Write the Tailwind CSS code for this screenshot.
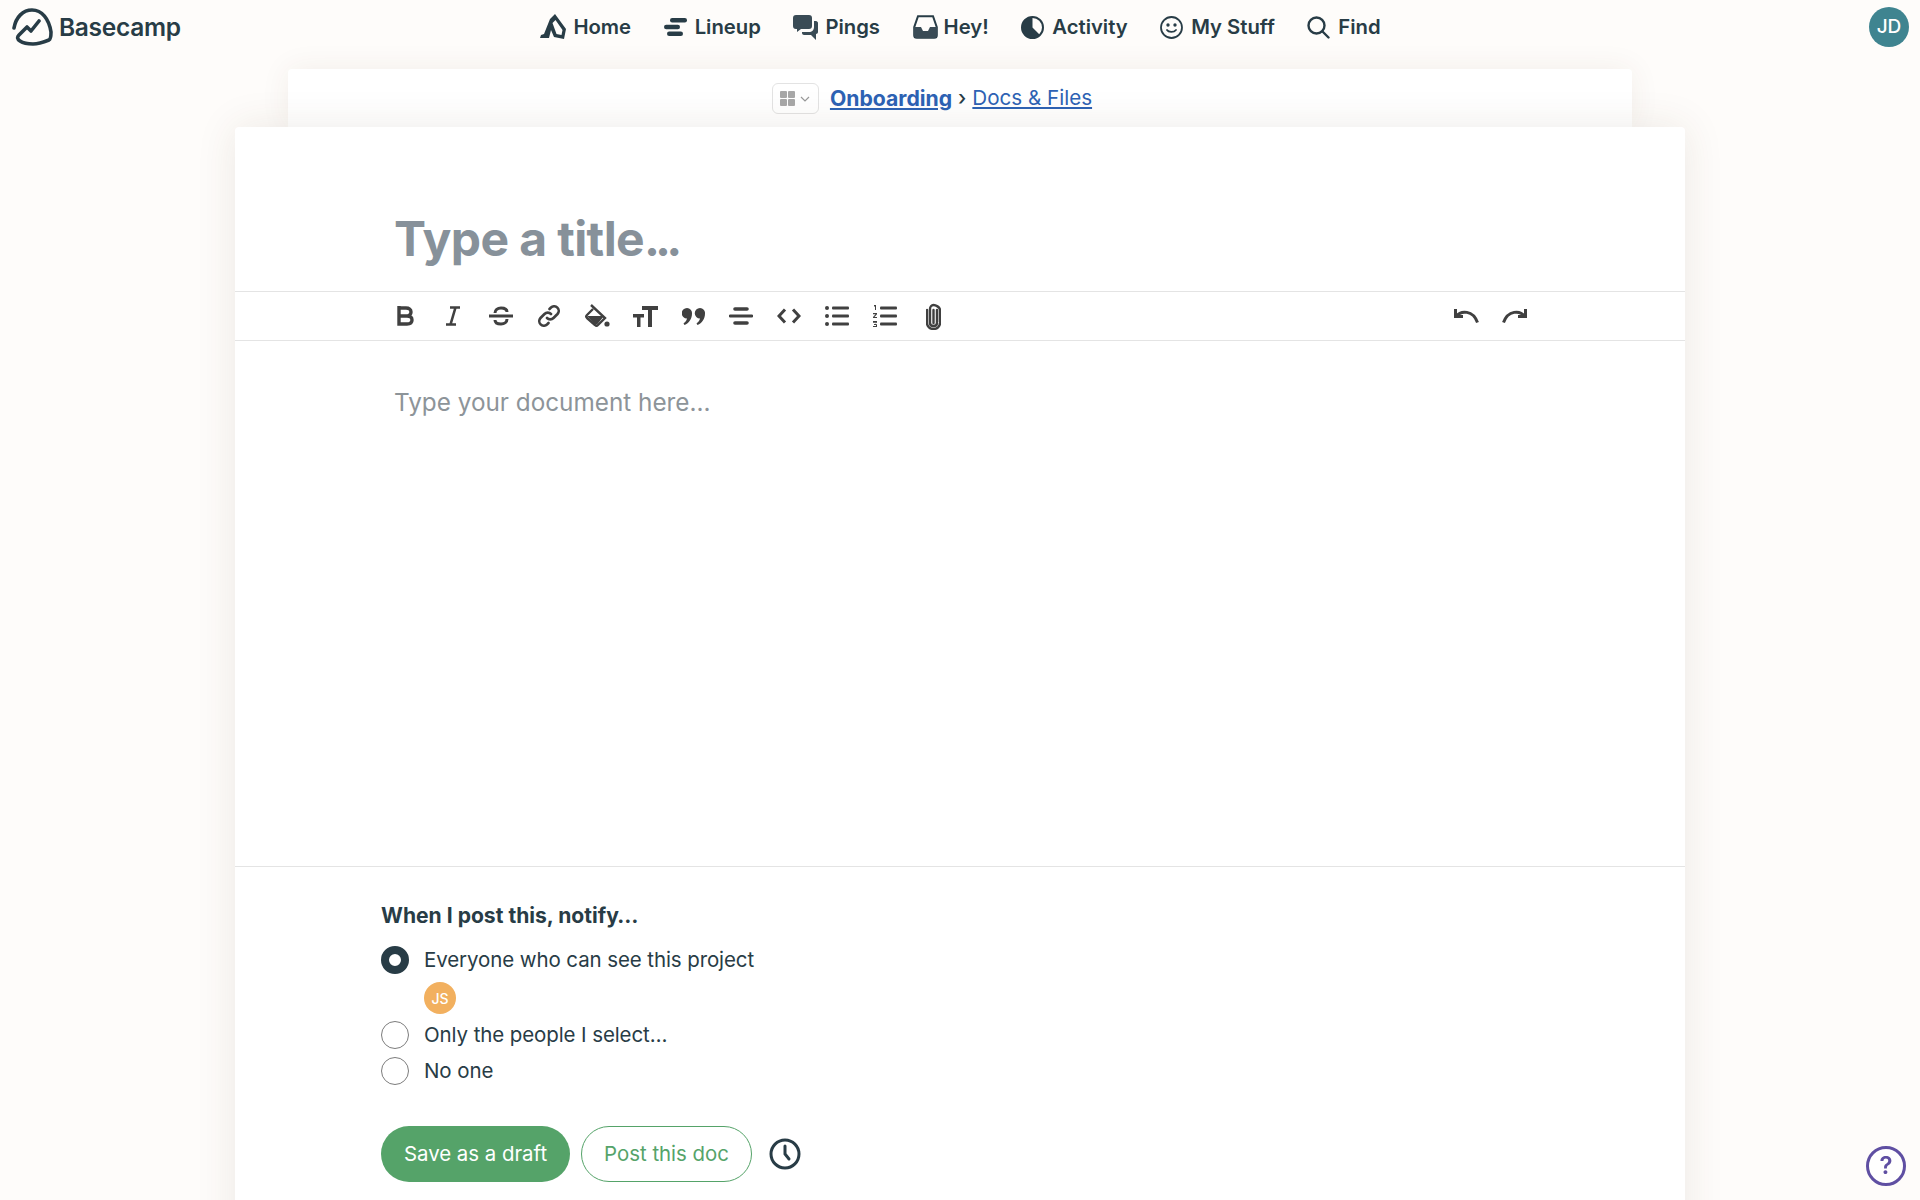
<!DOCTYPE html>
<html lang="en">
  <head>
    <meta charset="UTF-8" />
    <title>Basecamp - New doc</title>
    <script src="https://cdn.jsdelivr.net/npm/@tailwindcss/browser@4"></script>
  </head>

  <body class="font-['Inter',sans-serif] bg-[#fefcfa] text-[#283c46] h-screen overflow-hidden">
    <!-- Top nav -->
    <header class="grid grid-cols-[1fr_auto_1fr] items-center h-[54px] pl-3 pr-[11px]">
      <a class="flex items-center gap-[6px]">
        <svg class="w-[41px] h-[38px]" viewBox="0 0 41 38" fill="none" stroke="#283c46" stroke-width="3.600" stroke-linecap="round" stroke-linejoin="round">
          <path d="M2 20C4 9 11 2 20 2c10 0 17 9 19 22 0 4 0 7-2 8-5 2-11 4-16 4-5 0-10-1-13-3-3-2-3-4-1-6l8-8 4 4 8-10" />
        </svg>
        <span class="text-[24.500px] font-semibold tracking-[-0.3px]">Basecamp</span>
      </a>

      <nav class="flex items-center gap-[32.500px] text-[20.300px] font-semibold">
        <a class="flex items-center gap-[7px]">
          <svg class="w-[26px] h-[26px]" viewBox="0 0 26 26" fill="#283c46" fill-rule="evenodd"><path d="M15 0l11 15-2 10-10-2-3-7-2 8H0l1-3 3-1 6-15zM15.500 6l-3 3 4 11 5 1 1-5z" /></svg>
          Home
        </a>
        <a class="flex items-center gap-2">
          <svg class="w-[23px] h-[18px]" viewBox="0 0 23 18" fill="#283c46"><rect x="6" y="0" width="17" height="4.500" rx="2.200" /><rect x="0" y="6.800" width="16" height="4.500" rx="2.200" /><rect x="3" y="13.500" width="16" height="4.500" rx="2.200" /></svg>
          Lineup
        </a>
        <a class="flex items-center gap-[7px]">
          <svg class="w-[25px] h-[25px]" viewBox="0 0 25 25" fill="#3a4b55"><path d="M3 0h13c2 0 3 1 3 3v8c0 2-1 3-3 3H8l-4 3v-3H3c-2 0-3-1-3-3V3c0-2 1-3 3-3z" /><path d="M21 6h2c1 0 2 1 2 2v9c0 1-1 2-2 2v6l-5-5h-7c-1 0-2-1-2-2v-1h7c3 0 5-2 5-5V6z" /></svg>
          Pings
        </a>
        <a class="flex items-center gap-[6px]">
          <svg class="w-[25px] h-[24px]" viewBox="0 0 25 24" fill="none"><path d="M5 1.200h15l3.800 11v8c0 1.400-1 2.600-2.600 2.600H3.800c-1.600 0-2.600-1.200-2.600-2.600v-8z" stroke="#283c46" stroke-width="2" /><path d="M1 12h7l2 4h5l2-4h7v8c0 2-1 3-3 3H4c-2 0-3-1-3-3z" fill="#3a4b55" /></svg>
          Hey!
        </a>
        <a class="flex items-center gap-2">
          <svg class="w-[23px] h-[23px]" viewBox="0 0 23 23"><circle cx="11.500" cy="11.500" r="10.500" fill="none" stroke="#283c46" stroke-width="2" /><path d="M11.500 1v10.500l7.500 7.500A10.500 10.500 0 1 1 11.500 1z" fill="#283c46" /></svg>
          Activity
        </a>
        <a class="flex items-center gap-2">
          <svg class="w-[23px] h-[23px]" viewBox="0 0 23 23" fill="none" stroke="#283c46" stroke-width="1.800" stroke-linecap="round"><circle cx="11.500" cy="11.500" r="10.500" /><path d="M7 14c1.500 2.500 7 2.500 9 0" /><circle cx="8" cy="9" r="0.800" fill="#283c46" /><circle cx="15" cy="9" r="0.800" fill="#283c46" /></svg>
          My Stuff
        </a>
        <a class="flex items-center gap-2">
          <svg class="w-[23px] h-[23px]" viewBox="0 0 23 23" fill="none" stroke="#283c46" stroke-width="2.400" stroke-linecap="round"><circle cx="9.500" cy="9.500" r="8" /><path d="M15.500 15.500l6 6" /></svg>
          Find
        </a>
      </nav>

      <div class="flex justify-end">
        <div class="w-10 h-10 rounded-full bg-[#3f8490] text-white flex items-center justify-center text-[19px] font-medium">JD</div>
      </div>
    </header>

    <!-- Breadcrumbs -->
    <div class="w-[1344px] h-[58px] mx-auto mt-[15px] pr-[56px] pt-px bg-white rounded-t-[4px] shadow-[0_0_30px_rgba(80,60,30,0.07)] flex items-center justify-center gap-[11px] text-[20.600px] text-[#2d62b4]">
      <button class="w-[47px] h-[31px] border border-[#e3e3e3] rounded-[6px] flex items-center justify-center gap-[5px]">
        <svg class="w-[15px] h-[15px]" viewBox="0 0 15 15" fill="#a8a8a8"><rect width="7" height="7" rx="1" /><rect x="8" width="7" height="7" rx="1" /><rect y="8" width="7" height="7" rx="1" /><rect x="8" y="8" width="7" height="7" rx="1" /></svg>
        <svg class="w-[10px] h-[6px]" viewBox="0 0 10 6" fill="none" stroke="#999" stroke-width="1.200"><path d="M1 1l4 4 4-4" /></svg>
      </button>
      <div class="flex items-center gap-[6px]">
        <a class="font-bold underline text-[21.200px]">Onboarding</a>
        <span class="text-[#283c46] font-medium">›</span>
        <a class="underline">Docs &amp; Files</a>
      </div>
    </div>

    <!-- Editor card -->
    <main class="relative w-[1450px] mx-auto bg-white rounded-t-[4px] shadow-[0_0_40px_rgba(80,60,30,0.1)] h-[1200px]">
      <div class="h-[164px] pl-[159px] flex items-center pt-[60px]">
        <h1 class="text-[48px] font-bold tracking-[-0.6px] text-[#87919a]">Type a title<span class="tracking-[-5px]">...</span></h1>
      </div>

      <!-- Toolbar -->
      <div class="h-[50px] border-y border-[#e4e4e4] pl-[146px] flex items-center text-[#404040]">
        <button class="w-12 flex justify-center"><svg class="w-[17px] h-[20px]" viewBox="0 0 17 20" fill="none" stroke="#404040" stroke-width="3.400"><path d="M2 2h7c3 0 5 1.500 5 4s-2 4-5 4H2m0 0h8c3 0 5 1.500 5 4s-2 4-5 4H2zm0-16v16" /></svg></button>
        <button class="w-12 flex justify-center"><svg class="w-[14px] h-[20px]" viewBox="0 0 14 20" fill="none" stroke="#404040" stroke-width="2.600"><path d="M4 1.500h10M0 18.500h10M9.500 1.500l-5 17" /></svg></button>
        <button class="w-12 flex justify-center"><svg class="w-[24px] h-[22px]" viewBox="0 0 24 22" fill="none" stroke="#404040" stroke-width="3"><path d="M0 11h24M6 8c0-3 2.500-5 6-5s6 1.500 6 4M18 14c0 3-2.500 5-6 5s-6-1.500-6-4" /></svg></button>
        <button class="w-12 flex justify-center"><svg class="w-[22px] h-[22px]" viewBox="0 0 22 22" fill="none" stroke="#404040" stroke-width="2.600" stroke-linecap="round"><path d="M9 13a4.500 4.500 0 0 0 6.500 0l4-4a4.600 4.600 0 0 0-6.500-6.500l-1.500 1.500" /><path d="M13 9a4.500 4.500 0 0 0-6.500 0l-4 4a4.600 4.600 0 0 0 6.500 6.500l1.500-1.500" /></svg></button>
        <button class="w-12 flex justify-center"><svg class="w-[25px] h-[24px]" viewBox="0 0 25 24"><path d="M6 1l14 13-7 7c-1 1-2 1-3 0L2 14c-1-1-1-2 0-3l6-6" fill="none" stroke="#404040" stroke-width="2.400" /><path d="M2 12h17l-6.500 8c-1 1-2 1-3 0z" fill="#404040" /><circle cx="22" cy="20" r="2.600" fill="#404040" /></svg></button>
        <button class="w-12 flex justify-center"><svg class="w-[25px] h-[21px]" viewBox="0 0 25 21" fill="#404040"><path d="M9 0h16v4h-6v17h-4V4H9zM0 8h11v3.500H7.500V21h-3.500V11.500H0z" /></svg></button>
        <button class="w-12 flex justify-center"><svg class="w-[23px] h-[17px]" viewBox="0 0 23 17" fill="#404040"><path d="M5 0a5 5 0 0 1 5 5.500C10 11 7 15 2.500 17L1.500 15.500C3.500 14 4.500 12.500 5 10.500A5 5 0 0 1 5 0z" /><path d="M18 0a5 5 0 0 1 5 5.500C23 11 20 15 15.500 17L14.500 15.500C16.500 14 17.500 12.500 18 10.500A5 5 0 0 1 18 0z" /></svg></button>
        <button class="w-12 flex justify-center"><svg class="w-[24px] h-[18px]" viewBox="0 0 24 18" fill="none" stroke="#404040" stroke-linecap="round"><path d="M6 2h12M6 16h12" stroke-width="3.600" /><path d="M1 9h22" stroke-width="2.800" /></svg></button>
        <button class="w-12 flex justify-center"><svg class="w-[24px] h-[16px]" viewBox="0 0 24 16" fill="none" stroke="#404040" stroke-width="3"><path d="M8 1.500L2 8l6 6.500M16 1.500L22 8l-6 6.500" /></svg></button>
        <button class="w-12 flex justify-center"><svg class="w-[24px] h-[20px]" viewBox="0 0 24 20" fill="#404040"><circle cx="2" cy="2" r="2" /><circle cx="2" cy="10" r="2" /><circle cx="2" cy="18" r="2" /><rect x="7" y="0.500" width="17" height="3" rx="1" /><rect x="7" y="8.500" width="17" height="3" rx="1" /><rect x="7" y="16.500" width="17" height="3" rx="1" /></svg></button>
        <button class="w-12 flex justify-center"><svg class="w-[24px] h-[22px]" viewBox="0 0 24 22" fill="#404040"><rect x="7" y="1.500" width="17" height="3" rx="1" /><rect x="7" y="9.500" width="17" height="3" rx="1" /><rect x="7" y="17.500" width="17" height="3" rx="1" /><path d="M1 0h2v5H2V1.500H1zM0 8h4v1.200L1.500 12H4v1H0v-1l2.500-2.800H0zM0 16h4v1.500L2.500 18.500 4 19.500V22H0v-1h3v-1H1v-1h2v-1.200H0z" /></svg></button>
        <button class="w-12 flex justify-center"><svg class="w-[15px] h-[27px]" viewBox="0 0 15 27" fill="none" stroke="#404040" stroke-width="2.400" stroke-linecap="round"><path d="M11 7v13c0 2-1.500 3-3.500 3S4 22 4 20V6c0-2 1.500-4 3.500-4S14 4 14 7v13c0 3.500-3 6-6.500 6S1 23.500 1 20V7" /><path d="M7.500 7v13" /></svg></button>
        <div class="flex ml-[485px]">
          <button class="w-12 flex justify-center"><svg class="w-[25px] h-[14px]" viewBox="0 0 25 14" fill="none" stroke="#404040" stroke-width="3"><path d="M1.500 0v7.500H9" /><path d="M2 7.500C7 1 19 1 23.500 13.500" /></svg></button>
          <button class="w-12 flex justify-center"><svg class="w-[25px] h-[14px]" viewBox="0 0 25 14" fill="none" stroke="#404040" stroke-width="3"><path d="M23.500 0v7.500H16" /><path d="M23 7.500C18 1 6 1 1.500 13.500" /></svg></button>
        </div>
      </div>

      <!-- Body -->
      <div class="h-[526px] pl-[159px] pt-[46px] border-b border-[#e4e4e4] text-[24.300px] leading-[30px] text-[#8d9499]">Type your document here…</div>

      <!-- Subscribers -->
      <section class="pl-[146px] pt-[36px]">
        <h2 class="text-[21.100px] leading-[26px] font-bold">When I post this, notify…</h2>
        <div class="mt-[16px] text-[20.500px] tracking-[-0.1px]">
          <label class="flex items-center gap-[15px] h-[30px]">
            <span class="w-[28px] h-[28px] rounded-full border-[8px] border-[#283c46] bg-white"></span>
            Everyone who can see this project
          </label>
          <div class="ml-[43px] mt-[7px] w-8 h-8 rounded-full bg-[#f2b05f] text-white flex items-center justify-center text-[14px] font-medium">JS</div>
          <label class="flex items-center gap-[15px] h-[30px] mt-[6px] text-[#283c46]">
            <span class="w-[28px] h-[28px] rounded-full border border-[#7c7c7c] bg-white"></span>
            Only the people I select…
          </label>
          <label class="flex items-center gap-[15px] h-[30px] mt-[6px]">
            <span class="w-[28px] h-[28px] rounded-full border border-[#7c7c7c] bg-white"></span>
            No one
          </label>
        </div>
        <div class="mt-[40px] flex items-center">
          <button class="w-[189px] h-[56px] rounded-full bg-[#55a369] text-white text-[20.400px] pt-px">Save as a draft</button>
          <button class="w-[171px] h-[56px] ml-[11px] rounded-full border border-[#55a369] text-[#55a369] text-[20.400px] pt-px">Post this doc</button>
          <svg class="w-8 h-8 ml-[17px]" viewBox="0 0 32 32" fill="none" stroke="#283c46" stroke-width="3" stroke-linecap="round"><circle cx="16" cy="16" r="14" /><path d="M16 8v8l4 5" /></svg>
        </div>
      </section>
    </main>

    <!-- Help button -->
    <button class="fixed right-[14px] bottom-[14px] w-10 h-10 rounded-full border-[3px] border-[#5f4fa2] text-[#5f4fa2] bg-white/80 flex items-center justify-center text-[24px] font-semibold">?</button>
  </body>
</html>
